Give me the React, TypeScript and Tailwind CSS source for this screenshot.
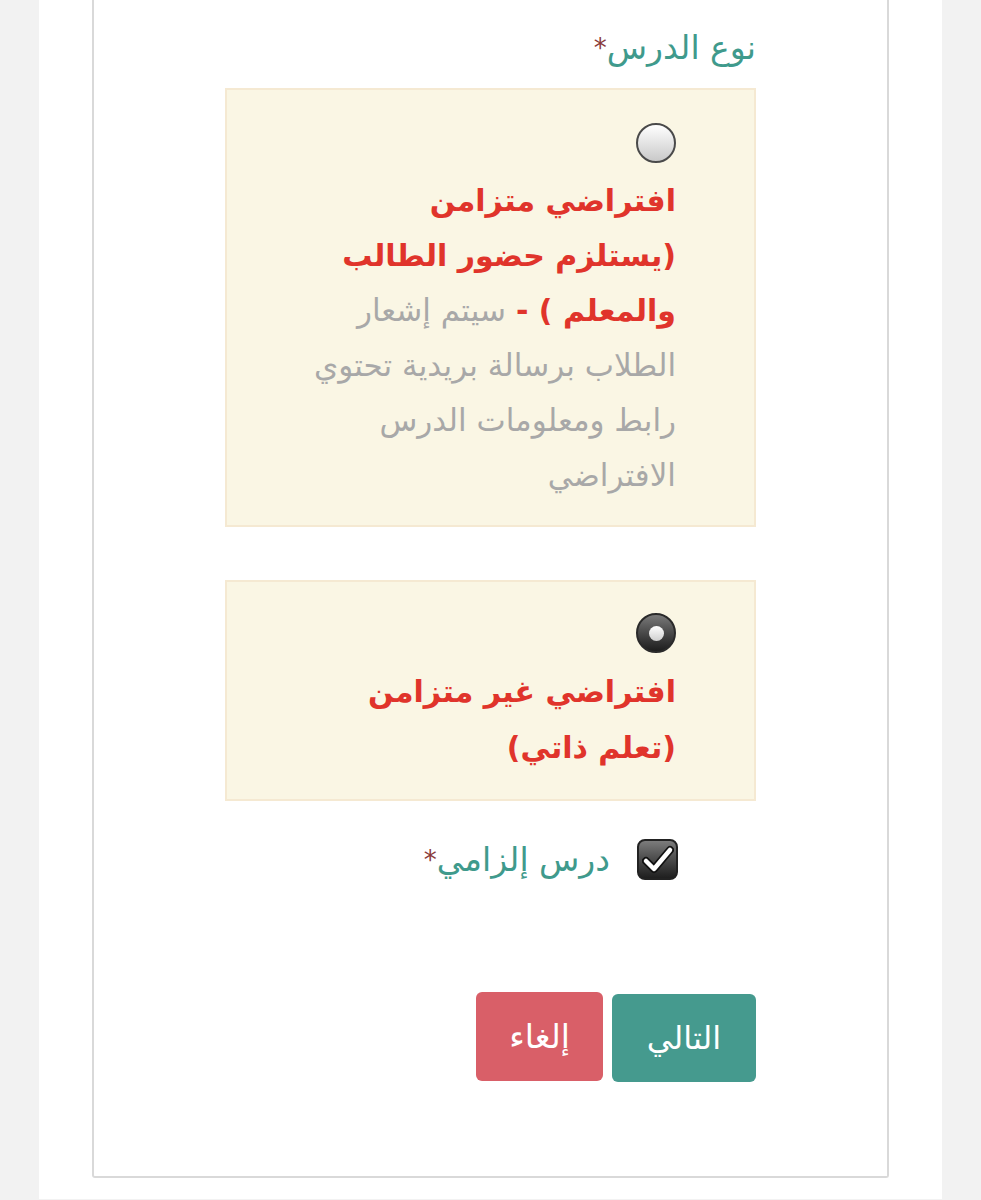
import React from "react";

const font = { fontFamily: '"DejaVu Sans", "Noto Sans", sans-serif' };

function Radio({ checked }: { checked?: boolean }) {
  if (checked) {
    return (
      <div className="w-[40px] h-[40px] rounded-full border-2 border-[#2a2a2a] bg-gradient-to-b from-[#7a7a7a] to-[#1e1e1e] flex items-center justify-center">
        <div className="w-[15px] h-[15px] rounded-full bg-gradient-to-b from-white to-[#cfcfcf]" />
      </div>
    );
  }
  return (
    <div className="w-[40px] h-[40px] rounded-full border-2 border-[#4a4a4a] bg-gradient-to-b from-white to-[#c9c9c9]" />
  );
}

function CheckBox() {
  return (
    <div className="w-[41px] h-[41px] rounded-[8px] border-2 border-[#222] bg-gradient-to-b from-[#7c7c7c] to-[#1f1f1f] flex items-center justify-center">
      <svg width="32" height="30" viewBox="0 0 32 30">
        <path d="M4 16 L12 24 L28 5" fill="none" stroke="#111" strokeWidth="8" strokeLinejoin="round" strokeLinecap="round" />
        <path d="M4 16 L12 24 L28 5" fill="none" stroke="#fff" strokeWidth="4.5" strokeLinejoin="round" strokeLinecap="round" />
      </svg>
    </div>
  );
}

export default function App() {
  return (
    <div dir="rtl" className="min-h-screen bg-[#f2f2f2]" style={font}>
      <div className="mx-[39px] bg-white pb-[21px]">
        <div className="mx-[53px] border-2 border-t-0 border-[#d9d9d9] rounded-b-[3px] h-[1178px]">
          <div className="w-[531px] mx-auto pt-[28px]">
            <div className="text-[33px] leading-[40px] text-[#3f9a8c]">
              نوع الدرس<span className="text-[#8a3a3a] text-[26px] align-top">*</span>
            </div>

            <div className="mt-[20px] bg-[#faf6e4] border-2 border-[#f5e9d2] pt-[33px] pb-[22px] px-[78px]">
              <Radio />
              <div className="mt-[10px] text-[31px] leading-[55px] text-right">
                <span className="text-[#e0342b] font-semibold text-[30px]">افتراضي متزامن</span>
                <br />
                <span className="text-[#e0342b] font-semibold text-[30px]">(يستلزم حضور الطالب</span>
                <br />
                <span className="text-[#e0342b] font-semibold text-[30px]">والمعلم ) -</span>{" "}
                <span className="text-[#a8a8a8]">سيتم إشعار</span>
                <br />
                <span className="text-[#a8a8a8]">الطلاب برسالة بريدية تحتوي</span>
                <br />
                <span className="text-[#a8a8a8]">رابط ومعلومات الدرس</span>
                <br />
                <span className="text-[#a8a8a8]">الافتراضي</span>
              </div>
            </div>

            <div className="mt-[53px] bg-[#faf6e4] border-2 border-[#f5e9d2] pt-[31px] pb-[23px] px-[78px]">
              <Radio checked />
              <div className="mt-[11px] text-[30px] leading-[56px] text-right text-[#e0342b] font-semibold">
                افتراضي غير متزامن
                <br />
                (تعلم ذاتي)
              </div>
            </div>

            <div className="mt-[38px] flex items-center gap-[27px] pr-[78px]">
              <CheckBox />
              <div className="text-[33px] leading-[40px] text-[#3f9a8c]">
                درس إلزامي<span className="text-[#8a3a3a] text-[26px] align-top">*</span>
              </div>
            </div>

            <div className="mt-[114px] flex gap-[9px]">
              <button className="w-[144px] h-[88px] rounded-[6px] bg-[#459a8e] text-white text-[32px]">
                التالي
              </button>
              <button className="w-[127px] h-[89px] -mt-[2px] rounded-[6px] bg-[#d95f68] text-white text-[33px]">
                إلغاء
              </button>
            </div>
          </div>
        </div>
      </div>
    </div>
  );
}
